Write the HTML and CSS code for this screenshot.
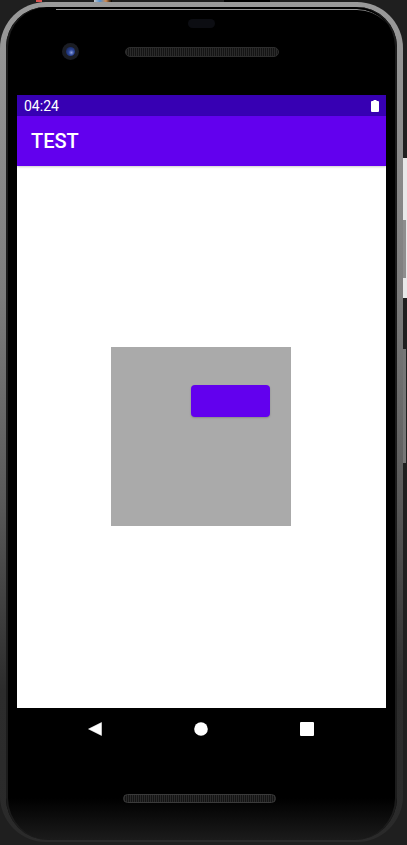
FILE: index.html
```html
<!DOCTYPE html>
<html lang="en">
<head>
    <meta charset="UTF-8">
    <meta name="viewport" content="width=device-width, initial-scale=1.0">
    <title>TEST</title>
    <link rel="stylesheet" href="styles.css">
</head>
<body>
    <div class="windowBit windowBit-red"></div>
    <div class="windowBit windowBit-colors"></div>
    <div class="windowBit windowBit-dark"></div>
    <div class="sideGap"></div>
    <div class="sideKey sideKey-top"></div>
    <div class="sideKey sideKey-low"></div>

    <main class="phone">
        <div class="bezel">
            <div class="topBezel">
                <div class="earpiece"></div>
                <div class="sensorRow">
                    <div class="camera"><div class="lens"></div></div>
                    <div class="speaker"></div>
                </div>
            </div>

            <section class="screen">
                <div class="statusBar">
                    <span class="clock">04:24</span>
                    <svg class="battery" viewBox="0 0 8 12" width="8" height="12">
                        <path d="M2.500 0h3v1H7a1 1 0 0 1 1 1v9a1 1 0 0 1-1 1H1a1 1 0 0 1-1-1V2a1 1 0 0 1 1-1h1.500z" fill="#fff"/>
                    </svg>
                </div>
                <header class="appBar">TEST</header>
                <div class="content">
                    <div class="greyBox">
                        <div class="purpleButton"></div>
                    </div>
                </div>
            </section>

            <nav class="navBar">
                <svg class="navIcon" viewBox="0 0 14 14" width="14" height="14">
                    <path d="M13.500 0.500v13L0.500 7z" fill="#fff" stroke="#fff" stroke-width="0.500" stroke-linejoin="round"/>
                </svg>
                <svg class="navIcon" viewBox="0 0 14 14" width="14" height="14">
                    <circle cx="7" cy="7" r="6.800" fill="#fff"/>
                </svg>
                <svg class="navIcon" viewBox="0 0 14 14" width="14" height="14">
                    <rect x="0" y="0" width="14" height="14" rx="1" fill="#fff"/>
                </svg>
            </nav>

            <div class="speaker speaker-bottom"></div>
        </div>
    </main>
</body>
</html>
```

FILE: styles.css
```css
* {
  box-sizing: border-box;
}

html,
body {
  margin: 0;
  height: 845px;
  overflow: hidden;
}

body {
  position: relative;
  background: #1f1f1f;
  font-family: Roboto, "Liberation Sans", sans-serif;
}

/* device shell */
.phone {
  width: 403px;
  height: 840px;
  margin-top: 2px;
  padding: 5px 6px 2px 6px;
  border-radius: 46px;
  background: linear-gradient(#9a9a9a 0, #7d7d7d 35%, #585858 60%, #2c2c2c 82%, #2a2a2a 100%);
}

.bezel {
  position: relative;
  height: 100%;
  border-radius: 40px 40px 42px 42px;
  background: linear-gradient(#000 0, #000 95%, #1b1b1b 100%);
  box-shadow: inset 2px 0 0 #1c1c1c, inset -2px 0 0 #1c1c1c;
}

/* thin highlight along the top of the glass */
.bezel::before {
  content: "";
  position: absolute;
  top: 2px;
  left: 50px;
  right: 2px;
  height: 40px;
  border-top: 1px solid #9c9c9c;
  border-radius: 0 38px 0 0;
  -webkit-mask-image: linear-gradient(to bottom, #000 0, transparent 14px);
  mask-image: linear-gradient(to bottom, #000 0, transparent 14px);
}

.topBezel {
  height: 88px;
  padding-top: 12px;
}

.earpiece {
  width: 27px;
  height: 9px;
  margin-left: 182px;
  border-radius: 5px;
  background: #0c0d12;
}

.sensorRow {
  display: flex;
  align-items: center;
  margin-top: 15px;
  padding-left: 56px;
}

.camera {
  display: flex;
  width: 17px;
  height: 17px;
  align-items: center;
  justify-content: center;
  border-radius: 50%;
  background: #1b1d24;
}

.lens {
  width: 9px;
  height: 9px;
  border-radius: 50%;
  background: radial-gradient(circle at 60% 62%, #8fa2e0 0, #2a4496 35%, #101a45 100%);
}

.speaker {
  width: 154px;
  height: 10px;
  margin-left: 46px;
  border: 1px solid #2e2e2e;
  border-radius: 5px;
  background: repeating-linear-gradient(90deg, #2a2a2a 0, #2a2a2a 1px, #141414 1px, #141414 2px);
}

.speaker-bottom {
  width: 153px;
  height: 9px;
  margin: 58px 0 0 117px;
  border-color: #3a3a3a;
}

.screen {
  display: flex;
  flex-direction: column;
  width: 369px;
  height: 613px;
  margin-left: 11px;
  background: #fff;
}

.statusBar {
  display: flex;
  height: 21px;
  align-items: center;
  justify-content: space-between;
  padding: 0 7px;
  background: #3700b3;
  color: #fff;
  font-size: 14px;
}

.appBar {
  height: 50px;
  padding-left: 14px;
  background: #6200ee;
  box-shadow: 0 1px 2px rgba(0, 0, 0, 0.2);
  color: #fff;
  font-size: 20px;
  font-weight: 500;
  line-height: 51px;
}

.content {
  display: flex;
  flex: 1;
  align-items: center;
  justify-content: center;
  padding-bottom: 2px;
}

.greyBox {
  width: 180px;
  height: 179px;
  margin-right: 1px;
  padding: 38px 0 0 80px;
  background: #aaa;
}

.purpleButton {
  width: 79px;
  height: 32px;
  border-radius: 4px;
  background: #6200ee;
  box-shadow: 0 1px 2px rgba(0, 0, 0, 0.2);
}

.navBar {
  display: flex;
  justify-content: center;
  gap: 92px;
  padding: 14px 2px 0 0;
}

.navIcon {
  display: block;
}

/* window content showing around the device */
.windowBit {
  position: absolute;
  top: 0;
  height: 2px;
}

.windowBit-red {
  left: 36px;
  width: 6px;
  background: #d9534f;
}

.windowBit-colors {
  left: 94px;
  width: 18px;
  background: linear-gradient(90deg, #c9c9c9, #4f8fd0, #d08a4f, #000);
}

.windowBit-dark {
  left: 224px;
  width: 46px;
  background: #000;
}

.sideKey {
  position: absolute;
  left: 403px;
  width: 3px;
  background: #8d8d8d;
}

.sideKey-top {
  top: 220px;
  height: 58px;
}

.sideKey-low {
  top: 349px;
  height: 114px;
  background: #767676;
}

.sideGap {
  position: absolute;
  top: 158px;
  left: 403px;
  width: 4px;
  height: 140px;
  background: #e8e8e8;
}
```
